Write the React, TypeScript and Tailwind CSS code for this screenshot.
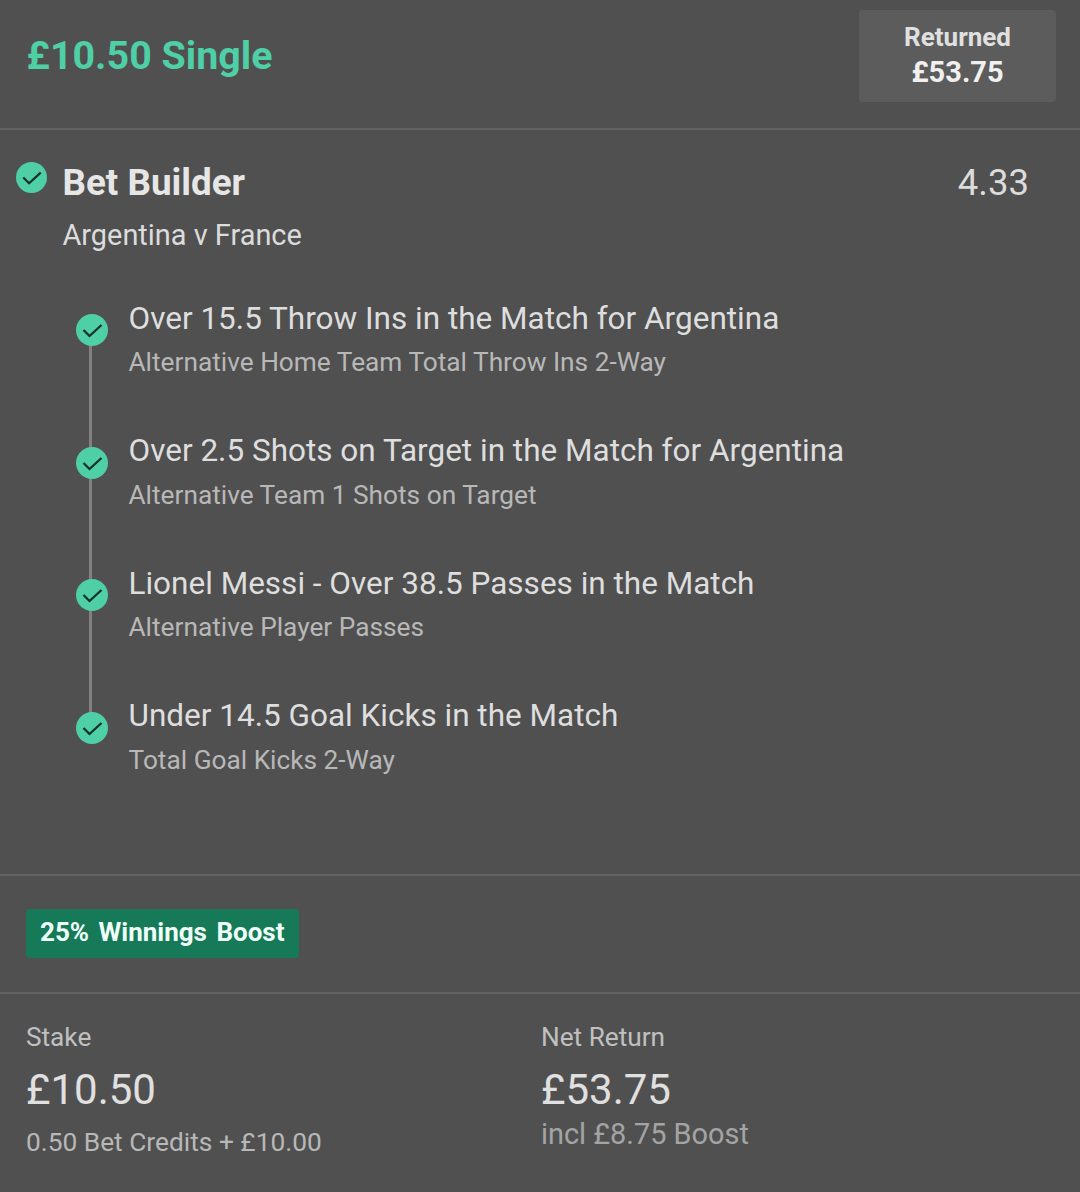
const Check = ({ size }: { size: number }) => (
  <svg width={size} height={size} viewBox="0 0 32 32" className="shrink-0">
    <circle cx="16" cy="16" r="16" fill="#4fcfa6" />
    <path d="M7.5 16 L13.5 22 L25.5 11" fill="none" stroke="#16302a" strokeWidth="2.3" />
  </svg>
);

const legs = [
  ["Over 15.5 Throw Ins in the Match for Argentina", "Alternative Home Team Total Throw Ins 2-Way"],
  ["Over 2.5 Shots on Target in the Match for Argentina", "Alternative Team 1 Shots on Target"],
  ["Lionel Messi - Over 38.5 Passes in the Match", "Alternative Player Passes"],
  ["Under 14.5 Goal Kicks in the Match", "Total Goal Kicks 2-Way"],
];

export default function App() {
  return (
    <div className="w-[1080px] h-[1192px] overflow-hidden bg-[#505050] font-['Roboto',sans-serif]">
      <header className="h-[130px] flex justify-between items-start border-b-2 border-[#636363] pl-[26.5px] pr-[24px] pt-[10px]">
        <h1 className="mt-[22px] text-[39.4px] leading-[48px] font-bold text-[#4fcfa6]">£10.50 Single</h1>
        <div className="w-[197px] h-[92px] rounded bg-[#5c5c5c] flex flex-col items-center pt-[11px]">
          <span className="text-[26px] leading-[32px] font-bold text-[#e0e0e0]">Returned</span>
          <span className="mt-[1px] text-[29px] leading-[36px] font-bold text-[#f0f0f0]">£53.75</span>
        </div>
      </header>

      <section className="h-[746px] border-b-2 border-[#636363] pt-[31px] pl-[16px] pr-[51px]">
        <div className="flex items-start">
          <div className="mt-[1px]"><Check size={31} /></div>
          <div className="ml-[15.5px] flex-1">
            <div className="flex justify-between items-center h-[44px]">
              <span className="text-[36.8px] leading-[44px] font-bold text-[#e6e6e6]">Bet Builder</span>
              <span className="text-[36.5px] leading-[44px] text-[#dcdcdc]">4.33</span>
            </div>
            <div className="mt-[11px] text-[28.9px] leading-[38px] text-[#dcdcdc]">Argentina v France</div>
          </div>
        </div>

        <div className="relative mt-[43px] ml-[60px]">
          <div className="absolute left-[13px] top-[45px] w-[3px] h-[380px] bg-[#808080]" />
          {legs.map(([title, sub]) => (
            <div key={title} className="relative flex items-start h-[132.5px]">
              <div className="mt-[17px]"><Check size={32} /></div>
              <div className="ml-[20.5px] pt-[0.5px]">
                <div className="text-[31.5px] leading-[42px] text-[#dedede]">{title}</div>
                <div className="mt-[1.5px] text-[26.25px] leading-[44px] -translate-y-px text-[#b8b8b8]">{sub}</div>
              </div>
            </div>
          ))}
        </div>
      </section>

      <section className="h-[118px] border-b-2 border-[#636363] pl-[26px] pt-[33px]">
        <span className="inline-block h-[49px] rounded-sm bg-[#167a58] px-[14px] text-[26px] leading-[46px] font-bold text-[#f0fff8] [word-spacing:3px]">25% Winnings Boost</span>
      </section>

      <section className="grid grid-cols-[515px_1fr] pl-[26px] pt-[25px]">
        <div>
          <div className="text-[26.2px] leading-[36px] text-[#c0c0c0]">Stake</div>
          <div className="mt-[9px] text-[42px] leading-[52px] text-[#e0e0e0]">£10.50</div>
          <div className="mt-[9px] text-[26.3px] leading-[34px] text-[#b8b8b8]">0.50 Bet Credits + £10.00</div>
        </div>
        <div>
          <div className="text-[26.2px] leading-[36px] text-[#c0c0c0]">Net Return</div>
          <div className="mt-[9px] text-[42px] leading-[52px] text-[#e0e0e0]">£53.75</div>
          <div className="text-[28.9px] leading-[37px] text-[#a4a4a4]">incl £8.75 Boost</div>
        </div>
      </section>
    </div>
  );
}
